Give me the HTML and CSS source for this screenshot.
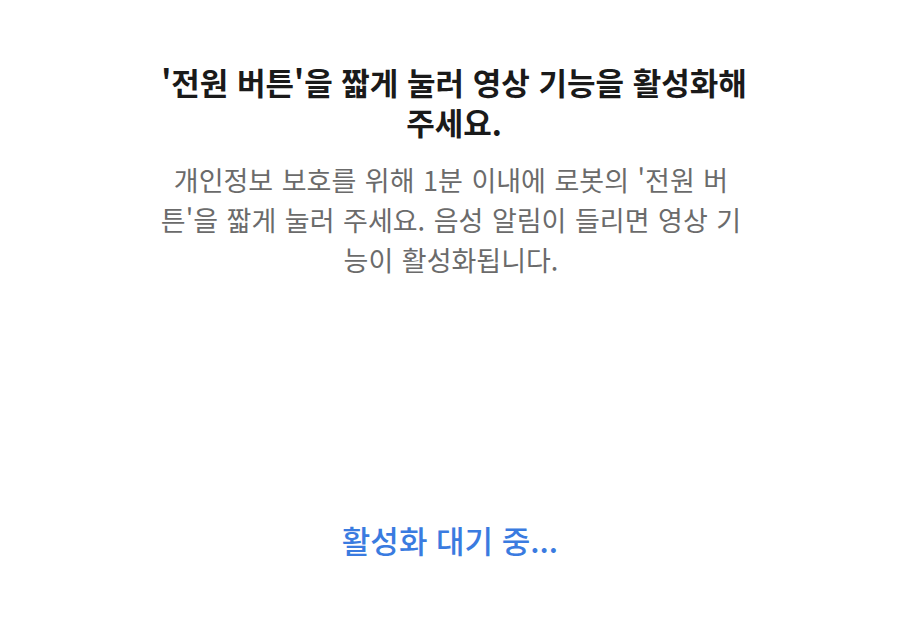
FILE: index.html
```html
<!DOCTYPE html>
<html lang="ko">
<head>
  <meta charset="UTF-8" />
  <meta name="viewport" content="width=device-width, initial-scale=1" />
  <title>영상 기능 활성화</title>
  <link rel="stylesheet" href="styles.css">
</head>
<body>

  <div class="screen">
    <div class="guide">
      <h1 class="guide-title">'전원 버튼'을 짧게 눌러 영상 기능을 활성화해 주세요.</h1>
      <p class="guide-desc">개인정보 보호를 위해 1분 이내에 로봇의 '전원 버튼'을 짧게 눌러 주세요. 음성 알림이 들리면 영상 기능이 활성화됩니다.</p>
    </div>

    <div class="status">활성화 대기 중...</div>
  </div>

</body>
</html>
```

FILE: styles.css
```css
body {
  margin: 0;
  font-family: "Noto Sans CJK KR", "Noto Sans", sans-serif;
  background-color: #ffffff;
  color: #1a1a1a;
}

.screen {
  height: 100vh;
  box-sizing: border-box;
  display: flex;
  flex-direction: column;
  justify-content: space-between;
  align-items: center;
  padding: 62px 0 79px;
}

.guide {
  width: 584px;
  padding-left: 2px;
  text-align: center;
}

.guide-title {
  margin: 0 -10px 0 -4px;
  font-size: 31px;
  line-height: 40px;
  font-weight: 700;
  word-break: keep-all;
}

.guide-desc {
  margin: 18px 0 0;
  font-size: 27px;
  line-height: 40px;
  word-spacing: 1px;
  color: #6b6b6b;
  word-break: break-all;
}

.status {
  font-size: 31px;
  font-weight: 500;
  line-height: 40px;
  color: #3a7be0;
}
```
